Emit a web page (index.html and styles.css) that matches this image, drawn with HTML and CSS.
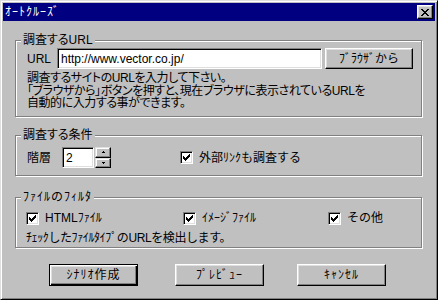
FILE: index.html
```html
<!DOCTYPE html>
<html lang="ja">
<head>
<meta charset="utf-8">
<title>ｵｰﾄｸﾙｰｽﾞ</title>
<link rel="stylesheet" href="styles.css">
</head>
<body>
<div class="window">
  <div class="titlebar">
    <span class="title">ｵｰﾄｸﾙｰｽﾞ</span>
    <span class="close-btn">
      <svg width="8" height="7" viewBox="0 0 8 7" shape-rendering="crispEdges"><path d="M0 0h2v1H0zM6 0h2v1H6zM1 1h2v1H1zM5 1h2v1H5zM2 2h4v1H2zM3 3h2v1H3zM2 4h4v1H2zM1 5h2v1H1zM5 5h2v1H5zM0 6h2v1H0zM6 6h2v1H6z" fill="#000"/></svg>
    </span>
  </div>
  <div class="content">
    <fieldset class="group g1">
      <legend class="fw">調査するURL</legend>
      <div class="inner">
        <div class="url-row">
          <span class="url-label">URL</span>
          <span class="field url-field">http://www.vector.co.jp/</span>
          <span class="btn browser-btn">ﾌﾞﾗｳｻﾞから</span>
        </div>
        <p class="desc fw">調査するサイトのURLを入力して下さい。<br>「ブラウザから」ボタンを押すと、現在ブラウザに表示されているURLを<br>自動的に入力する事ができます。</p>
      </div>
    </fieldset>

    <fieldset class="group g2">
      <legend class="fw">調査する条件</legend>
      <div class="inner cond-row">
        <span class="depth-label">階層</span>
        <span class="field depth-field">2</span>
        <span class="spin">
          <span class="spin-btn"><svg width="3" height="2" viewBox="0 0 3 2" shape-rendering="crispEdges"><path d="M1 0h1v1H1zM0 1h3v1H0z" fill="#000"/></svg></span>
          <span class="spin-btn"><svg width="3" height="2" viewBox="0 0 3 2" shape-rendering="crispEdges"><path d="M0 0h3v1H0zM1 1h1v1H1z" fill="#000"/></svg></span>
        </span>
        <span class="check-item ext-link">
          <span class="checkbox"><svg width="7" height="7" viewBox="0 0 7 7" shape-rendering="crispEdges"><path d="M0 2h1v3H0zM1 3h1v3H1zM2 4h1v3H2zM3 3h1v3H3zM4 2h1v3H4zM5 1h1v3H5zM6 0h1v3H6z" fill="#000"/></svg></span>
          <span class="check-label">外部ﾘﾝｸも調査する</span>
        </span>
      </div>
    </fieldset>

    <fieldset class="group g3">
      <legend class="hw">ﾌｧｲﾙのﾌｨﾙﾀ</legend>
      <div class="inner">
        <div class="filter-row">
          <span class="check-item">
            <span class="checkbox"><svg width="7" height="7" viewBox="0 0 7 7" shape-rendering="crispEdges"><path d="M0 2h1v3H0zM1 3h1v3H1zM2 4h1v3H2zM3 3h1v3H3zM4 2h1v3H4zM5 1h1v3H5zM6 0h1v3H6z" fill="#000"/></svg></span>
            <span class="check-label">HTMLﾌｧｲﾙ</span>
          </span>
          <span class="check-item">
            <span class="checkbox"><svg width="7" height="7" viewBox="0 0 7 7" shape-rendering="crispEdges"><path d="M0 2h1v3H0zM1 3h1v3H1zM2 4h1v3H2zM3 3h1v3H3zM4 2h1v3H4zM5 1h1v3H5zM6 0h1v3H6z" fill="#000"/></svg></span>
            <span class="check-label">ｲﾒｰｼﾞﾌｧｲﾙ</span>
          </span>
          <span class="check-item">
            <span class="checkbox"><svg width="7" height="7" viewBox="0 0 7 7" shape-rendering="crispEdges"><path d="M0 2h1v3H0zM1 3h1v3H1zM2 4h1v3H2zM3 3h1v3H3zM4 2h1v3H4zM5 1h1v3H5zM6 0h1v3H6z" fill="#000"/></svg></span>
            <span class="check-label">その他</span>
          </span>
        </div>
        <p class="filter-note">ﾁｪｯｸしたﾌｧｲﾙﾀｲﾌﾟのURLを検出します。</p>
      </div>
    </fieldset>

    <div class="buttons">
      <span class="btn action-btn default">ｼﾅﾘｵ作成</span>
      <span class="btn action-btn preview">ﾌﾟﾚﾋﾞｭｰ</span>
      <span class="btn action-btn cancel">ｷｬﾝｾﾙ</span>
    </div>
  </div>
</div>
</body>
</html>
```
FILE: styles.css
```css
html, body {
  margin: 0;
  padding: 0;
  background: #c0c0c0;
}

body {
  font-family: "Liberation Sans", "Noto Sans CJK JP", sans-serif;
  font-size: 12px;
  color: #000;
}

.fw {
  font-feature-settings: "palt";
}

.hw {
  letter-spacing: 1px;
}

.window {
  width: 438px;
  height: 300px;
  box-sizing: border-box;
  background: #c0c0c0;
  border: 1px solid;
  border-color: #dfdfdf #000 #000 #dfdfdf;
  box-shadow: inset 1px 1px 0 #fff, inset -1px -1px 0 #808080;
  padding: 2px;
}

.titlebar {
  height: 18px;
  background: #000080;
  display: flex;
  align-items: center;
  justify-content: space-between;
  padding: 0 2px 0 2px;
}

.title {
  color: #fff;
  font-size: 12px;
  line-height: 18px;
  letter-spacing: 1px;
}

.close-btn {
  width: 16px;
  height: 14px;
  box-sizing: border-box;
  background: #c0c0c0;
  border: 1px solid;
  border-color: #fff #000 #000 #fff;
  box-shadow: inset -1px -1px 0 #808080, inset 1px 1px 0 #dfdfdf;
  display: flex;
  align-items: center;
  justify-content: center;
  padding-right: 1px;
}

.close-btn svg { display: block; }

.content {
  padding-left: 12px;
}

.group {
  margin: 0;
  border: 1px solid #808080;
  box-shadow: 1px 1px 0 #fff, inset 1px 1px 0 #fff;
  width: 407px;
  box-sizing: border-box;
  padding: 0 5px 0 5px;
  min-width: 0;
}

.group legend {
  padding: 0 2px;
  background: #c0c0c0;
  line-height: 14px;
  height: 14px;
}

.g1 {
  margin-top: 12px;
  height: 84px;
}

.g1 .inner {
  padding-left: 6px;
  padding-top: 1px;
}

.url-row {
  display: flex;
  align-items: center;
  height: 21px;
}

.url-label {
  width: 30px;
  line-height: 14px;
}

.field {
  box-sizing: border-box;
  background: #fff;
  border: 1px solid;
  border-color: #808080 #fff #fff #808080;
  box-shadow: inset 1px 1px 0 #000, inset -1px -1px 0 #dfdfdf;
  display: flex;
  align-items: center;
  padding-left: 3px;
  line-height: 14px;
}

.url-field {
  width: 265px;
  height: 21px;
}

.btn {
  box-sizing: border-box;
  background: #c0c0c0;
  border: 1px solid;
  border-color: #fff #000 #000 #fff;
  box-shadow: inset -1px -1px 0 #808080, inset 1px 1px 0 #dfdfdf;
  display: flex;
  align-items: center;
  justify-content: center;
  line-height: 14px;
}

.browser-btn {
  width: 88px;
  height: 21px;
  margin-left: 3px;
}

.desc {
  margin: 3px 0 0 0;
  line-height: 12.5px;
  letter-spacing: -0.45px;
  white-space: nowrap;
}

.g2 {
  margin-top: 11px;
  height: 48px;
}

.cond-row {
  display: flex;
  align-items: center;
  padding-left: 6px;
  margin-top: 5px;
  height: 21px;
}

.depth-label {
  width: 35px;
  line-height: 14px;
}

.depth-field {
  width: 32px;
  height: 21px;
}

.spin {
  display: flex;
  flex-direction: column;
  width: 16px;
  height: 21px;
  margin-left: 1px;
}

.spin-btn {
  flex: 1;
  box-sizing: border-box;
  background: #c0c0c0;
  border: 1px solid;
  border-color: #dfdfdf #000 #000 #dfdfdf;
  box-shadow: inset -1px -1px 0 #808080, inset 1px 1px 0 #fff;
  display: flex;
  align-items: center;
  justify-content: center;
}

.spin-btn svg { display: block; }

.check-item {
  display: flex;
  align-items: center;
}

.ext-link {
  margin-left: 69px;
}

.checkbox {
  width: 13px;
  height: 13px;
  box-sizing: border-box;
  background: #fff;
  border: 1px solid;
  border-color: #808080 #fff #fff #808080;
  box-shadow: inset 1px 1px 0 #000, inset -1px -1px 0 #dfdfdf;
  display: flex;
  align-items: center;
  justify-content: center;
}

.checkbox svg { display: block; }

.check-label {
  margin-left: 6px;
  line-height: 14px;
}

.g3 {
  margin-top: 14px;
  height: 58px;
}

.g3 .inner {
  padding-left: 5px;
}

.filter-row {
  display: grid;
  grid-template-columns: 157px 145px auto;
  align-items: center;
  height: 14px;
  margin-top: 7px;
}

.filter-note {
  margin: 6px 0 0 0;
  line-height: 14px;
  letter-spacing: -0.4px;
  white-space: nowrap;
}

.buttons {
  display: flex;
  margin-top: 16px;
  padding-left: 34px;
}

.action-btn {
  width: 89px;
  height: 22px;
  letter-spacing: 1px;
}

.action-btn.default {
  border: 1px solid #000;
  box-shadow: inset 1px 1px 0 #fff, inset -1px -1px 0 #000, inset -2px -2px 0 #808080, inset 2px 2px 0 #dfdfdf;
}

.preview {
  margin-left: 37px;
}

.cancel {
  margin-left: 33px;
}
```
